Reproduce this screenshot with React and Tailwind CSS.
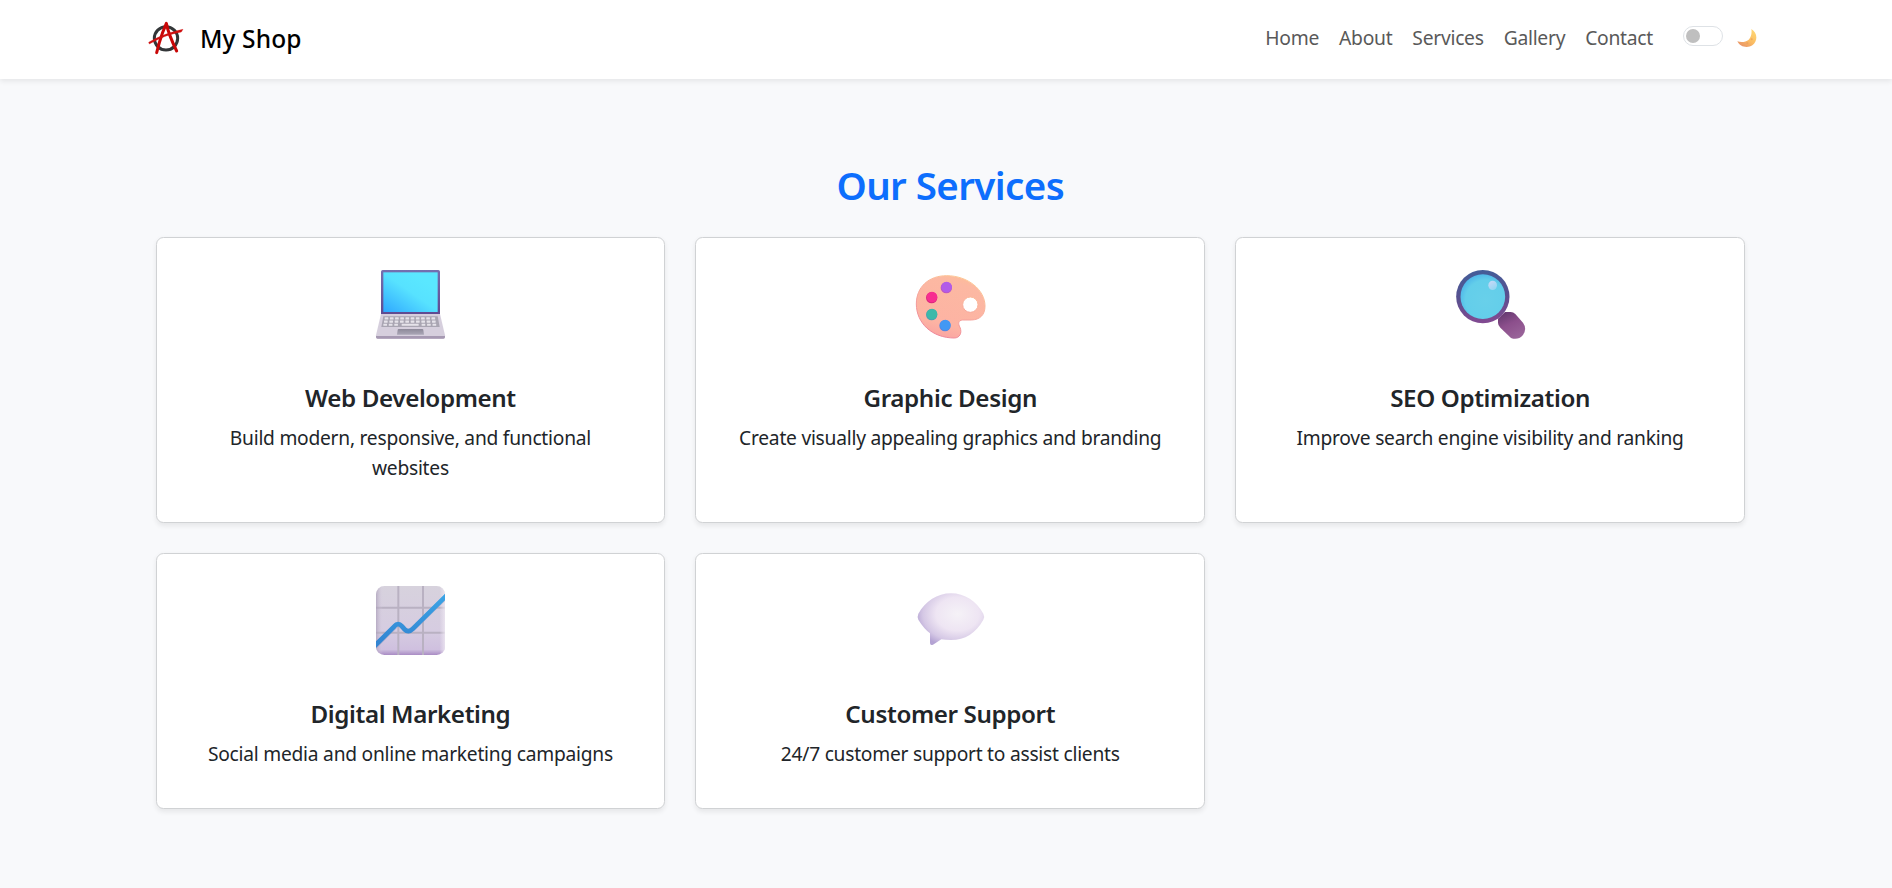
import React, { useState } from "react";

function Logo() {
  return (
    <svg viewBox="0 0 120 120" className="h-10 w-10">
      <circle cx="60" cy="61" r="35" fill="none" stroke="#333638" strokeWidth="9" />
      <path d="M32 104 L40 74 Q50 40 61 16 Q68 50 92 99" fill="none" stroke="#c90707" strokeWidth="9" strokeLinecap="round" strokeLinejoin="round" />
      <path d="M8 73 C42 53 75 42 111 34 L106 42 C72 48 40 60 10 78 Z" fill="#cf1010" stroke="#cf1010" strokeWidth="1" />
    </svg>
  );
}

function Moon() {
  return (
    <svg viewBox="0 0 60 60" className="h-5 w-5">
      <defs>
        <linearGradient id="moon" x1="1" y1="0" x2="0.3" y2="1">
          <stop offset="0" stopColor="#ffdc78" />
          <stop offset="0.6" stopColor="#fbbd63" />
          <stop offset="1" stopColor="#e99567" />
        </linearGradient>
      </defs>
      <path d="M43 3 C62 14 63 39 46 52 C31 62 9 57 1 40 C12 44 26 43 35 35 C43 27 45 14 43 3 Z" fill="url(#moon)" />
      <circle cx="44" cy="34" r="3" fill="#efa75d" />
      <circle cx="31" cy="46" r="3" fill="#eda25c" />
    </svg>
  );
}

function Laptop() {
  const keys = [];
  for (let r = 0; r < 3; r++)
    for (let c = 0; c < 10; c++) {
      if (r === 2 && c > 2 && c < 7) continue;
      keys.push(<rect key={r + "-" + c} x={74 - r * 2 + c * (15.6 + r * 0.4)} y={187 + r * 9.5} width="11" height="6.5" rx="1" fill="#e6e3ea" />);
    }
  return (
    <svg viewBox="0 0 300 285" className="h-[95px] w-[100px]">
      <defs>
        <linearGradient id="screen" x1="0" y1="1" x2="0.75" y2="0.2">
          <stop offset="0" stopColor="#2fa8ff" />
          <stop offset="0.65" stopColor="#57e2ff" />
          <stop offset="1" stopColor="#5ae7ff" />
        </linearGradient>
        <linearGradient id="bezel" x1="0" y1="0" x2="0" y2="1">
          <stop offset="0" stopColor="#7470b0" />
          <stop offset="1" stopColor="#5f4a91" />
        </linearGradient>
        <linearGradient id="pad" x1="0" y1="0" x2="0" y2="1">
          <stop offset="0" stopColor="#8d8999" />
          <stop offset="1" stopColor="#aaa6b6" />
        </linearGradient>
      </defs>
      <path d="M68 45 H235 Q240 45 240 50 V178 H63 V50 Q63 45 68 45 Z" fill="url(#bezel)" />
      <rect x="70" y="52" width="163" height="119" fill="url(#screen)" />
      <path d="M63 177 H240 L255 241 V246 Q255 251 250 251 H53 Q48 251 48 246 V241 Z" fill="#d6cfdd" />
      <path d="M48 243 H255 V246 Q255 251 250 251 H53 Q48 251 48 246 Z" fill="#a699b2" />
      <path d="M70 184 H233 L239 216 H64 Z" fill="#a9a5b2" />
      {keys}
      <rect x="125" y="206" width="51" height="6.5" rx="1" fill="#e6e3ea" />
      <path d="M116 222 H187 Q190 222 190 225 L192 239 H111 L113 225 Q113 222 116 222 Z" fill="url(#pad)" />
    </svg>
  );
}

function Palette() {
  return (
    <svg viewBox="0 0 300 285" className="h-[95px] w-[100px]">
      <defs>
        <linearGradient id="wood" x1="0.7" y1="0" x2="0.4" y2="1">
          <stop offset="0" stopColor="#fdbd98" />
          <stop offset="0.14" stopColor="#fcb8a2" />
          <stop offset="0.8" stopColor="#fdb3a3" />
          <stop offset="1" stopColor="#faa4a1" />
        </linearGradient>
        <linearGradient id="woodEdge" x1="0.8" y1="0" x2="0.3" y2="1">
          <stop offset="0" stopColor="#ffce94" />
          <stop offset="0.5" stopColor="#f6a79b" />
          <stop offset="1" stopColor="#ee8398" />
        </linearGradient>
      </defs>
      <path fillRule="evenodd" d="M140 62 C204 62 255 105 255 153 C255 180 240 194 214 195 L188 195 C174 196 174 207 180 217 C187 234 179 249 163 249 C96 249 49 204 49 147 C49 96 86 62 140 62 Z M211 126 A23 23 0 1 0 211 172 A23 23 0 1 0 211 126 Z" fill="url(#wood)" stroke="url(#woodEdge)" strokeWidth="3" />
      <circle cx="139" cy="98" r="17" fill="#bd56c4" /><circle cx="140" cy="96" r="16" fill="#b25ce8" />
      <circle cx="95" cy="128" r="17" fill="#d9277c" /><circle cx="96" cy="126" r="16" fill="#f72e90" />
      <circle cx="95" cy="179" r="17" fill="#4d9eb2" /><circle cx="96" cy="177" r="16" fill="#3cb9a9" />
      <circle cx="135" cy="212" r="17" fill="#5886df" /><circle cx="136" cy="210" r="16" fill="#4298f3" />
    </svg>
  );
}

function Magnifier() {
  return (
    <svg viewBox="0 0 300 285" className="h-[95px] w-[100px]">
      <defs>
        <linearGradient id="rim" x1="0.4" y1="0" x2="0.5" y2="1">
          <stop offset="0" stopColor="#435d99" />
          <stop offset="0.5" stopColor="#58508f" />
          <stop offset="1" stopColor="#834a91" />
        </linearGradient>
        <radialGradient id="lens" cx="0.56" cy="0.58" r="0.6">
          <stop offset="0" stopColor="#68d0ea" />
          <stop offset="0.75" stopColor="#63ceea" />
          <stop offset="1" stopColor="#4fb7ea" />
        </radialGradient>
        <linearGradient id="grip" x1="0.2" y1="0" x2="0.7" y2="1">
          <stop offset="0" stopColor="#64396f" />
          <stop offset="0.45" stopColor="#8c4f8c" />
          <stop offset="1" stopColor="#9a659a" />
        </linearGradient>
        <linearGradient id="glint" x1="0.8" y1="1" x2="0.2" y2="0">
          <stop offset="0" stopColor="#8ed6f2" />
          <stop offset="1" stopColor="#c9d8f7" />
        </linearGradient>
      </defs>
      <path d="M195 171 H212 Q220 171 226 177 L249 203 Q262 221 249 240 Q234 257 213 249 L181 218 Q174 211 174 203 V191 Z" fill="url(#grip)" />
      <circle cx="128.500" cy="125" r="80" fill="url(#rim)" />
      <circle cx="128.500" cy="125" r="67" fill="url(#lens)" />
      <ellipse cx="158" cy="91" rx="13" ry="14" fill="url(#glint)" />
    </svg>
  );
}

function Chart() {
  return (
    <svg viewBox="0 -12 300 285" className="h-[95px] w-[100px]">
      <defs>
        <linearGradient id="sheet" x1="0.5" y1="0" x2="0.5" y2="1">
          <stop offset="0" stopColor="#d7d2dd" />
          <stop offset="0.65" stopColor="#d6cce1" />
          <stop offset="0.92" stopColor="#cfc0df" />
          <stop offset="1" stopColor="#a98cc4" />
        </linearGradient>
        <linearGradient id="sheetSide" x1="0" y1="0" x2="1" y2="0">
          <stop offset="0" stopColor="#a99db7" stopOpacity="0.7" />
          <stop offset="0.1" stopColor="#d8cee2" stopOpacity="0" />
          <stop offset="0.92" stopColor="#eee8f2" stopOpacity="0" />
          <stop offset="1" stopColor="#eee8f2" stopOpacity="0.8" />
        </linearGradient>
        <linearGradient id="trend" x1="0" y1="0" x2="0" y2="1">
          <stop offset="0" stopColor="#3ba5e6" />
          <stop offset="1" stopColor="#3282d0" />
        </linearGradient>
        <clipPath id="sheetClip"><rect x="48" y="33" width="207" height="207" rx="25" /></clipPath>
      </defs>
      <g clipPath="url(#sheetClip)">
        <rect x="48" y="33" width="207" height="207" fill="url(#sheet)" />
        <path d="M115 33 V240 M189 33 V240 M48 98 H255 M48 173 H255" stroke="#b9b1c2" strokeWidth="6" fill="none" />
        <rect x="48" y="33" width="207" height="207" fill="url(#sheetSide)" />
        <path d="M40 220 L103 157 Q115 142 128 157 Q143 178 160 160 L265 59" stroke="#a99fbb" strokeWidth="15" fill="none" opacity="0.4" />
        <path d="M40 217 L103 154 Q114 141 126 154 L134 163 Q145 175 159 161 L265 56" stroke="url(#trend)" strokeWidth="14" fill="none" />
      </g>
    </svg>
  );
}

function Bubble() {
  return (
    <svg viewBox="0 -12 300 285" className="h-[95px] w-[100px]">
      <defs>
        <radialGradient id="bubble" cx="0.6" cy="0.4" r="0.65">
          <stop offset="0" stopColor="#f5f2f7" />
          <stop offset="0.5" stopColor="#eee5f3" />
          <stop offset="0.8" stopColor="#d5c8e5" />
          <stop offset="1" stopColor="#b4a3d3" />
        </radialGradient>
      </defs>
      <path d="M153 55 C194 55 230 79 250 116 Q255 125 250 134 C228 174 195 195 153 195 Q137 195 124 193 L99 209 Q91 213 90 205 V175 Q71 160 55 134 Q51 125 55 116 C76 79 112 55 153 55 Z" fill="url(#bubble)" />
    </svg>
  );
}

const services = [
  { title: "Web Development", text: "Build modern, responsive, and functional websites", Icon: Laptop },
  { title: "Graphic Design", text: "Create visually appealing graphics and branding", Icon: Palette },
  { title: "SEO Optimization", text: "Improve search engine visibility and ranking", Icon: Magnifier },
  { title: "Digital Marketing", text: "Social media and online marketing campaigns", Icon: Chart },
  { title: "Customer Support", text: "24/7 customer support to assist clients", Icon: Bubble },
];

const links = ["Home", "About", "Services", "Gallery", "Contact"];

export default function App() {
  const [dark, setDark] = useState(false);
  return (
    <div className="min-h-[888px] bg-[#f8f9fb] font-['Noto_Sans',sans-serif] text-[#212529]">
      <nav className="flex h-[79px] items-start bg-white pr-[135px] pl-[146px] shadow-[0_2.5px_5px_rgba(0,0,0,0.075)]">
        <a href="#" className="flex items-start pt-[18px] text-black">
          <Logo />
          <span className="ml-[14px] pt-px text-[24.5px] leading-10 font-medium tracking-[0.1px]">My Shop</span>
        </a>
        <div className="ml-auto flex gap-5 pt-[23px] text-[19.3px] leading-[30px] tracking-[-0.28px] text-[#595959]">
          {links.map((l) => (
            <a key={l} href="#">{l}</a>
          ))}
        </div>
        <button
          type="button"
          aria-pressed={dark}
          onClick={() => setDark(!dark)}
          className="mt-[26px] ml-[30px] flex h-5 w-10 items-center rounded-full border border-[#dee2e6] bg-white px-0.5"
        >
          <span className="h-3.5 w-3.5 rounded-full bg-[#bfbfbf]" />
        </button>
        <span className="mt-7 ml-3.5"><Moon /></span>
      </nav>
      <main className="pt-[82px] pr-[147px] pl-[155.5px]">
        <h2 className="text-center text-[38.5px] leading-[48px] font-semibold tracking-[-0.6px] text-[#0d6efd]">Our Services</h2>
        <div className="mt-7 grid grid-cols-3 grid-rows-[286px_256px] gap-[30px]">
          {services.map(({ title, text, Icon }) => (
            <div key={title} className="flex flex-col items-center rounded-[7.5px] border border-[#d0d2d4] bg-white px-[37px] pt-[17px] text-center shadow-[0_2.5px_5px_rgba(0,0,0,0.075)]">
              <div className="mr-[0.5px]"><Icon /></div>
              <h5 className="mt-[33px] text-[24.2px] leading-[30px] font-semibold tracking-[-0.38px]">{title}</h5>
              <p className="mt-2.5 text-[19.2px] leading-[30px] tracking-[-0.24px]">{text}</p>
            </div>
          ))}
        </div>
      </main>
    </div>
  );
}
